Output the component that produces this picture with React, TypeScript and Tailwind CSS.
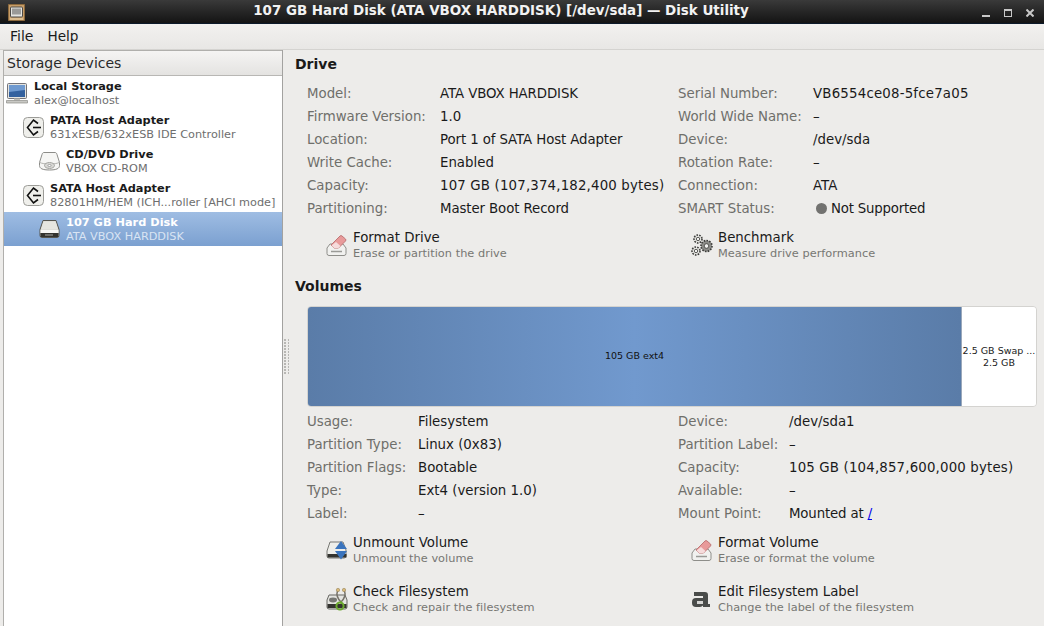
const font = { fontFamily: '"DejaVu Sans", sans-serif' };

function Chip() {
  return (
    <svg width="17" height="17" viewBox="0 0 17 17">
      <path d="M0.5 0.5h16v16h-16z" fill="#c79d68" stroke="#8c6a3e" />
      <rect x="2.500" y="3" width="12" height="10" rx="1" fill="#e4e4e0" stroke="#4c4a46" />
      <rect x="4" y="4.500" width="9" height="6" fill="#9a9a98" />
      <path d="M2 15h13" stroke="#f0dcb4" />
    </svg>
  );
}

function Laptop() {
  return (
    <svg width="22" height="21" viewBox="0 0 22 21">
      <rect x="1.500" y="0.500" width="19" height="15" rx="1" fill="#e4e4e0" stroke="#74747a" />
      <rect x="3" y="2" width="16" height="12" fill="#33619f" />
      <path d="M3 2h16v5L3 9z" fill="#6f9ad0" />
      <rect x="8" y="15.500" width="6" height="2" fill="#bdbdb9" />
      <path d="M0.500 17.500h21v2.500H0.500z" fill="#c8c8c4" stroke="#8c8c88" strokeWidth="0.7" />
    </svg>
  );
}

function Hba() {
  return (
    <svg width="21" height="21" viewBox="0 0 21 21">
      <rect x="0.5" y="0.5" width="20" height="20" rx="4" fill="#efefeb" stroke="#9c9c98" />
      <path d="M15 6.500L10.500 3L4.500 10.500L10.500 18L15 14.500" fill="none" stroke="#111" strokeWidth="1.6" />
      <path d="M10 10.500H18" fill="none" stroke="#111" strokeWidth="1.6" />
    </svg>
  );
}

function Optical() {
  return (
    <svg width="21" height="20" viewBox="0 0 21 20">
      <path d="M5 1.500h11c1 0 1.500 0.500 2 2l2.500 8v3c0 3-3 4.500-10 4.500s-10-1.500-10-4.500v-3L3 3.500c0.500-1.500 1-2 2-2z" fill="#f6f6f4" stroke="#8c8c88" />
      <path d="M1 11.500c3 2 16 2 19 0" fill="none" stroke="#b4b4b0" />
      <ellipse cx="10.500" cy="14.500" rx="5" ry="3" fill="#d8d8d4" stroke="#a4a4a0" />
      <ellipse cx="10.500" cy="14.500" rx="1.600" ry="1" fill="#fff" stroke="#888" strokeWidth="0.7" />
    </svg>
  );
}

function HardDisk() {
  return (
    <svg width="21" height="20" viewBox="0 0 21 20">
      <path d="M4 1.500h13l3 9v6a2 2 0 0 1-2 2H3a2 2 0 0 1-2-2v-6z" fill="#d8d8d2" stroke="#55554f" />
      <path d="M4.500 2.500h12l2.500 8H2z" fill="#e6e6e0" />
      <path d="M1.500 11h18v3h-18z" fill="#f8f8f6" />
      <path d="M1.500 14h18v4h-18z" fill="#33332f" />
      <path d="M6 16h8" stroke="#a8a8a4" />
    </svg>
  );
}

function FormatIcon() {
  return (
    <svg width="21" height="21" viewBox="0 0 21 21">
      <path d="M4 9h13l3 4v5.500a2 2 0 0 1-2 2H3a2 2 0 0 1-2-2V13z" fill="#f1f1ef" stroke="#8e8e8a" />
      <path d="M5 16.500h11" stroke="#9a9a96" strokeWidth="1.500" />
      <path d="M5 10l9-9a1.500 1.500 0 0 1 2 0l3.500 3a1.500 1.500 0 0 1 0 2l-7 7H8z" fill="#e89a9a" stroke="#c07878" />
      <path d="M5.500 10.500l2.500 2.500h4.500l2-2-4.500-4z" fill="#f6dcdc" />
    </svg>
  );
}

function Gear({ x, y, r, fill }: { x: number; y: number; r: number; fill: string }) {
  return (
    <g>
      <circle cx={x} cy={y} r={r} fill={fill} stroke="#3c3c3a" strokeWidth="1.600" strokeDasharray="1.600 1.200" />
      <circle cx={x} cy={y} r={r * 0.42} fill="#f2f2f0" stroke="#3c3c3a" strokeWidth="0.8" />
    </g>
  );
}

function BenchmarkIcon() {
  return (
    <svg width="22" height="22" viewBox="0 0 22 22">
      <Gear x={7} y={5} r={4} fill="#e4e4e0" />
      <Gear x={5} y={17} r={4} fill="#e4e4e0" />
      <Gear x={15.500} y={12} r={5.500} fill="#8c8c88" />
    </svg>
  );
}

function UnmountIcon() {
  return (
    <svg width="22" height="20" viewBox="0 0 22 20">
      <path d="M4 2h13l3 8v6a2 2 0 0 1-2 2H3a2 2 0 0 1-2-2v-5z" fill="#eeeeea" stroke="#777773" />
      <path d="M1.500 14h19v3.500h-19z" fill="#33332f" />
      <path d="M15 1l6 8h-12z" fill="#3a74bd" />
      <path d="M15 19.500l6-8.500h-12z" fill="#3a74bd" />
    </svg>
  );
}

function CheckIcon() {
  return (
    <svg width="22" height="24" viewBox="0 0 22 24">
      <path d="M3 8h16l2 5v7a2 2 0 0 1-2 2H3a2 2 0 0 1-2-2v-7z" fill="#e4e4e0" stroke="#666662" />
      <ellipse cx="7" cy="13" rx="4" ry="2.400" fill="#777773" />
      <path d="M1.500 17h19v4h-19z" fill="#33332f" />
      <path d="M11.500 4c-1.500 4 0.500 8 3.500 11c3-3 5-7 3.500-11" fill="none" stroke="#77736a" strokeWidth="1.500" />
      <circle cx="12" cy="3" r="1.700" fill="#d8b878" stroke="#8c7a50" strokeWidth="0.5" />
      <circle cx="18" cy="3" r="1.700" fill="#d8b878" stroke="#8c7a50" strokeWidth="0.5" />
      <circle cx="14" cy="19" r="3.600" fill="none" stroke="#6aa82e" strokeWidth="2" />
      <path d="M15 14.500v2" stroke="#6aa82e" strokeWidth="2" />
    </svg>
  );
}

function LabelIcon() {
  return (
    <svg width="20" height="20" viewBox="0 0 20 20">
      <path d="M3 3h11a3 3 0 0 1 3 3v9h2v3h-7v-1.500a4 4 0 0 1-3 1.500H5a4 4 0 0 1-4-4v-1a4 4 0 0 1 4-4h7V7H3z" fill="#4a4c4a" />
      <rect x="6" y="12" width="6" height="3" fill="#d6d6d4" />
    </svg>
  );
}

type Device = { icon: React.ReactNode; name: string; sub: string; indent: string; selected?: boolean };

const devices: Device[] = [
  { icon: <Laptop />, name: 'Local Storage', sub: 'alex@localhost', indent: 'pl-0' },
  { icon: <Hba />, name: 'PATA Host Adapter', sub: '631xESB/632xESB IDE Controller', indent: 'pl-[16px]' },
  { icon: <Optical />, name: 'CD/DVD Drive', sub: 'VBOX CD-ROM', indent: 'pl-[32px]' },
  { icon: <Hba />, name: 'SATA Host Adapter', sub: '82801HM/HEM (ICH...roller [AHCI mode]', indent: 'pl-[16px]' },
  { icon: <HardDisk />, name: '107 GB Hard Disk', sub: 'ATA VBOX HARDDISK', indent: 'pl-[32px]', selected: true },
];

function DeviceRow({ d }: { d: Device }) {
  return (
    <div
      className={`flex h-[34px] items-center ${d.indent} ${
        d.selected ? 'bg-gradient-to-b from-[#9fbde3] to-[#7ba0d0]' : ''
      }`}
    >
      <div className="flex w-[26px] shrink-0 justify-center">{d.icon}</div>
      <div className="ml-[4px] mt-px leading-[14px] whitespace-nowrap">
        <div className={`text-[11.33px] font-bold ${d.selected ? 'text-white' : 'text-[#1a1a1a]'}`}>{d.name}</div>
        <div className={`mt-px text-[11.25px] ${d.selected ? 'text-[#d9e4f3]' : 'text-[#6e6e6e]'}`}>{d.sub}</div>
      </div>
    </div>
  );
}

function Field({ label, value, w, vc }: { label: string; value: React.ReactNode; w: string; vc?: string }) {
  return (
    <div className="flex h-[23px] items-center whitespace-nowrap">
      <div className={`${w} shrink-0 text-[#6f6f6b]`}>{label}</div>
      <div className={`text-[#1a1a1a] ${vc ?? ''}`}>{value}</div>
    </div>
  );
}

function Action({ icon, title, sub }: { icon: React.ReactNode; title: string; sub: string }) {
  return (
    <div className="flex h-[32px] items-center">
      <div className="flex w-[24px] shrink-0 justify-start pl-px">{icon}</div>
      <div className="ml-[4px] whitespace-nowrap">
        <div className="mt-px text-[13.33px] leading-[16px] text-[#1a1a1a]">{title}</div>
        <div className="text-[11.33px] leading-[15px] tracking-[0.03px] text-[#777773]">{sub}</div>
      </div>
    </div>
  );
}

export default function App() {
  return (
    <div className="flex h-[626px] w-[1044px] flex-col overflow-hidden bg-[#edecea] text-[13.33px]" style={font}>
      {/* Window title */}
      <div className="relative flex h-[24px] shrink-0 items-center justify-center border-b border-[#0c1a2a] bg-gradient-to-b from-[#3a3a3a] to-[#141414] pr-[42px]">
        <div className="absolute left-[8px] top-[4px]">
          <Chip />
        </div>
        <span className="text-[13.45px] font-bold text-[#f2f2f2]">107 GB Hard Disk (ATA VBOX HARDDISK) [/dev/sda] — Disk Utility</span>
        <div className="absolute right-[10px] top-[9px] flex items-start gap-[14px]">
          <div className="mt-[6px] h-[2px] w-[8px] bg-[#c8c8c8]" />
          <div className="h-[8px] w-[8px] border border-t-2 border-[#c8c8c8]" />
          <svg width="8" height="8" viewBox="0 0 8 8">
            <path d="M0.500 0.500l7 7M7.500 0.500l-7 7" stroke="#c8c8c8" strokeWidth="2" />
          </svg>
        </div>
      </div>

      {/* Menu */}
      <div className="flex h-[26px] shrink-0 items-center gap-[14px] border-b border-[#d4d3d0] bg-gradient-to-b from-[#f2f1ef] to-[#e8e7e5] pl-[10px] text-[#1a1a1a]">
        <span className="text-[14px]">File</span>
        <span className="text-[13.6px]">Help</span>
      </div>

      <div className="flex min-h-0 flex-1">
        {/* Sidebar */}
        <div className="ml-[3px] w-[279px] shrink-0 border-l border-t border-[#b0afac] bg-white">
          <div className="flex h-[25px] items-center border-b border-[#b8b7b4] bg-gradient-to-b from-[#f5f4f3] to-[#e4e3e1] pl-[3px] text-[14px] text-[#2a2a2a]">
            Storage Devices
          </div>
          {devices.map((d) => (
            <DeviceRow key={d.name} d={d} />
          ))}
        </div>

        {/* Details */}
        <div className="relative min-w-0 flex-1 border-l border-[#a3a2a0] pl-[12px] pr-[7px]">
          <div className="absolute left-[1px] top-[289px] grid grid-cols-2 gap-x-[2px] gap-y-[1.500px]">
            {Array.from({ length: 24 }).map((_, i) => (
              <div key={i} className="h-[1.500px] w-[1.500px] bg-[#b8b7b4]" />
            ))}
          </div>

          <div className="flex h-[25px] items-end text-[14px] font-bold text-[#1a1a1a]">Drive</div>
          <div className="mt-[7px] grid grid-cols-[371px_1fr] pl-[12px]">
            <div>
              <Field w="w-[133px]" label="Model:" value="ATA VBOX HARDDISK" vc="tracking-[-0.1px]" />
              <Field w="w-[133px]" label="Firmware Version:" value="1.0" />
              <Field w="w-[133px]" label="Location:" value="Port 1 of SATA Host Adapter" vc="tracking-[-0.1px]" />
              <Field w="w-[133px]" label="Write Cache:" value="Enabled" />
              <Field w="w-[133px]" label="Capacity:" value="107 GB (107,374,182,400 bytes)" vc="tracking-[0.17px]" />
              <Field w="w-[133px]" label="Partitioning:" value="Master Boot Record" vc="tracking-[-0.1px]" />
            </div>
            <div>
              <Field w="w-[135px]" label="Serial Number:" value="VB6554ce08-5fce7a05" vc="tracking-[0.2px]" />
              <Field w="w-[135px]" label="World Wide Name:" value="–" />
              <Field w="w-[135px]" label="Device:" value="/dev/sda" />
              <Field w="w-[135px]" label="Rotation Rate:" value="–" />
              <Field w="w-[135px]" label="Connection:" value="ATA" />
              <Field
                w="w-[135px]"
                label="SMART Status:"
                value={
                  <span className="ml-[3px] flex items-center gap-[4px]">
                    <span className="h-[11px] w-[11px] rounded-full bg-[#727270]" />
                    <span className="tracking-[-0.2px]">Not Supported</span>
                  </span>
                }
              />
            </div>
          </div>
          <div className="mt-[9px] grid grid-cols-[365px_1fr] pl-[30px]">
            <Action icon={<FormatIcon />} title="Format Drive" sub="Erase or partition the drive" />
            <Action icon={<BenchmarkIcon />} title="Benchmark" sub="Measure drive performance" />
          </div>

          <div className="mt-[16px] flex h-[18px] items-center text-[14px] font-bold text-[#1a1a1a]">Volumes</div>
          <div className="ml-[12px] mt-[11px] flex h-[101px] overflow-hidden rounded-[4px] border border-[#d4d3d0]">
            <div className="flex w-[654px] items-center justify-center border-r border-[#9aa8bb] bg-gradient-to-r from-[#5a7ca8] via-[#7199ce] to-[#5a7ca8] text-[9.500px] text-[#111]">
              105 GB ext4
            </div>
            <div className="flex flex-1 flex-col items-center justify-center bg-white text-[9.500px] leading-[12px] text-[#222] whitespace-nowrap">
              <span>2.5 GB Swap ...</span>
              <span>2.5 GB</span>
            </div>
          </div>

          <div className="mt-[3px] grid grid-cols-[371px_1fr] pl-[12px]">
            <div>
              <Field w="w-[111px]" label="Usage:" value="Filesystem" />
              <Field w="w-[111px]" label="Partition Type:" value="Linux (0x83)" />
              <Field w="w-[111px]" label="Partition Flags:" value="Bootable" />
              <Field w="w-[111px]" label="Type:" value="Ext4 (version 1.0)" />
              <Field w="w-[111px]" label="Label:" value="–" />
            </div>
            <div>
              <Field w="w-[111px]" label="Device:" value="/dev/sda1" />
              <Field w="w-[111px]" label="Partition Label:" value="–" />
              <Field w="w-[111px]" label="Capacity:" value="105 GB (104,857,600,000 bytes)" vc="tracking-[0.17px]" />
              <Field w="w-[111px]" label="Available:" value="–" />
              <Field
                w="w-[111px]"
                label="Mount Point:"
                value={
                  <span className="tracking-[-0.15px]">
                    Mounted at <span className="text-[#0000ee] underline">/</span>
                  </span>
                }
              />
            </div>
          </div>
          <div className="mt-[9px] grid grid-cols-[365px_1fr] gap-y-[17px] pl-[30px]">
            <Action icon={<UnmountIcon />} title="Unmount Volume" sub="Unmount the volume" />
            <Action icon={<FormatIcon />} title="Format Volume" sub="Erase or format the volume" />
            <Action icon={<CheckIcon />} title="Check Filesystem" sub="Check and repair the filesystem" />
            <Action icon={<LabelIcon />} title="Edit Filesystem Label" sub="Change the label of the filesystem" />
          </div>
        </div>
      </div>
    </div>
  );
}
